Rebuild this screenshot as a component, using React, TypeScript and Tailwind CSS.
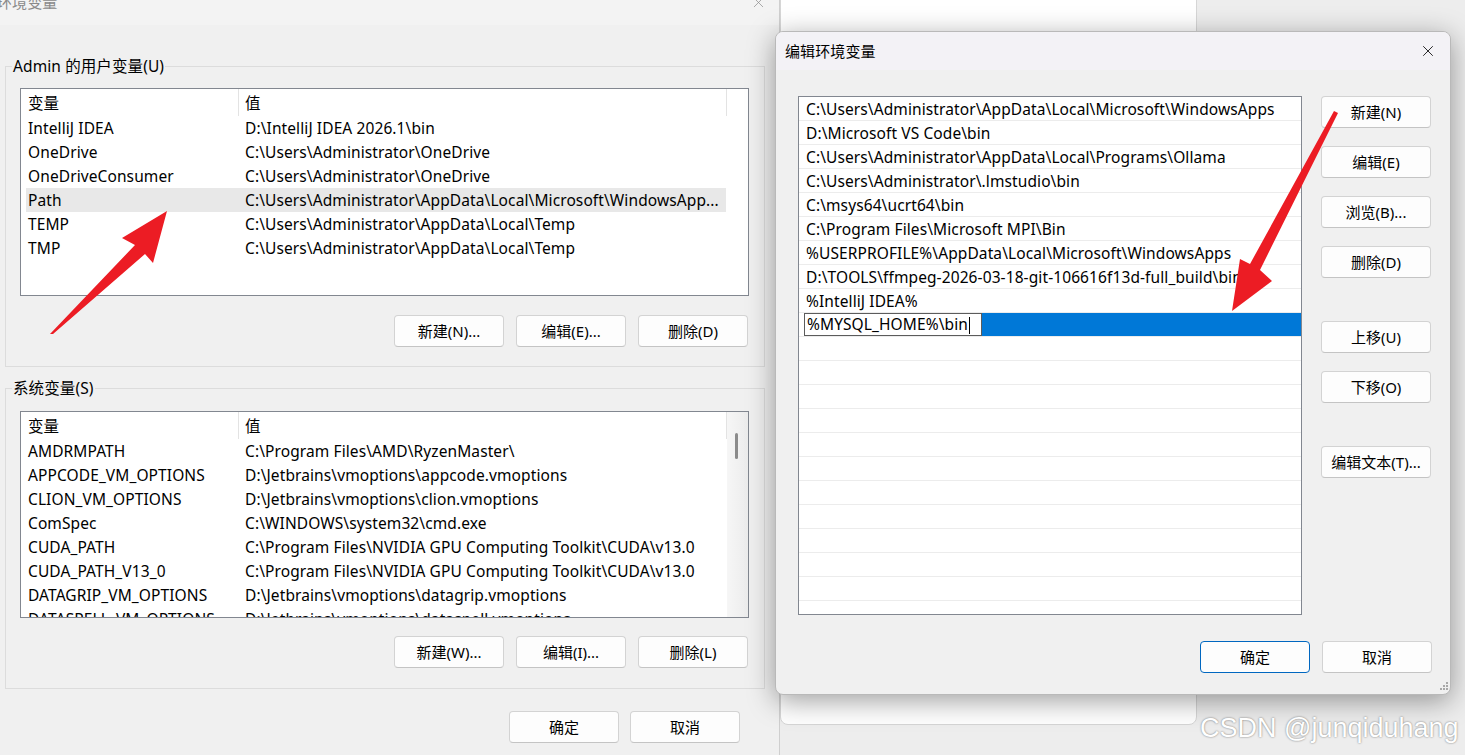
import { X } from "lucide-react"
import clsx from "clsx"

const userVars = [
  ["IntelliJ IDEA", "D:\\IntelliJ IDEA 2026.1\\bin"],
  ["OneDrive", "C:\\Users\\Administrator\\OneDrive"],
  ["OneDriveConsumer", "C:\\Users\\Administrator\\OneDrive"],
  ["Path", "C:\\Users\\Administrator\\AppData\\Local\\Microsoft\\WindowsApp..."],
  ["TEMP", "C:\\Users\\Administrator\\AppData\\Local\\Temp"],
  ["TMP", "C:\\Users\\Administrator\\AppData\\Local\\Temp"],
]

const sysVars = [
  ["AMDRMPATH", "C:\\Program Files\\AMD\\RyzenMaster\\"],
  ["APPCODE_VM_OPTIONS", "D:\\Jetbrains\\vmoptions\\appcode.vmoptions"],
  ["CLION_VM_OPTIONS", "D:\\Jetbrains\\vmoptions\\clion.vmoptions"],
  ["ComSpec", "C:\\WINDOWS\\system32\\cmd.exe"],
  ["CUDA_PATH", "C:\\Program Files\\NVIDIA GPU Computing Toolkit\\CUDA\\v13.0"],
  ["CUDA_PATH_V13_0", "C:\\Program Files\\NVIDIA GPU Computing Toolkit\\CUDA\\v13.0"],
  ["DATAGRIP_VM_OPTIONS", "D:\\Jetbrains\\vmoptions\\datagrip.vmoptions"],
  ["DATASPELL_VM_OPTIONS", "D:\\Jetbrains\\vmoptions\\dataspell.vmoptions"],
]

const pathEntries = [
  "C:\\Users\\Administrator\\AppData\\Local\\Microsoft\\WindowsApps",
  "D:\\Microsoft VS Code\\bin",
  "C:\\Users\\Administrator\\AppData\\Local\\Programs\\Ollama",
  "C:\\Users\\Administrator\\.lmstudio\\bin",
  "C:\\msys64\\ucrt64\\bin",
  "C:\\Program Files\\Microsoft MPI\\Bin",
  "%USERPROFILE%\\AppData\\Local\\Microsoft\\WindowsApps",
  "D:\\TOOLS\\ffmpeg-2026-03-18-git-106616f13d-full_build\\bin",
  "%IntelliJ IDEA%",
]

function Btn({ label, primary }: { label: string; primary?: boolean }) {
  return (
    <button
      className={clsx(
        "flex h-[32px] w-[110px] shrink-0 items-center justify-center rounded-[4px] border bg-[#fdfdfd] text-[15px] tracking-normal text-black",
        primary ? "border-[#0067c0]" : "border-[#d3d3d3] border-b-[#c4c4c4]"
      )}
    >
      {label}
    </button>
  )
}

function VarList({
  rows,
  selected,
  scroll,
  height,
}: {
  rows: string[][]
  selected?: number
  scroll?: boolean
  height: string
}) {
  return (
    <div className={clsx("flex w-[729px] overflow-hidden border border-[#828790] bg-white", height)}>
      <div className="flex w-[706px] flex-col">
        <div className="flex h-[27px] shrink-0">
          <div className="flex w-[218px] items-center border-r border-[#e3e3e3] pl-[7px] pt-[2px]">变量</div>
          <div className="flex flex-1 items-center border-r border-[#e3e3e3] pl-[6px] pt-[2px]">值</div>
        </div>
        {rows.map(([name, value], i) => (
          <div
            key={name}
            className={clsx(
              "ml-[5px] flex h-[24px] w-[700px] shrink-0 items-center whitespace-nowrap pt-[2px]",
              i === selected && "bg-[#e8e8e8]"
            )}
          >
            <div className="w-[212px] pl-[2px]">{name}</div>
            <div className="pl-[7px]">{value}</div>
          </div>
        ))}
      </div>
      {scroll ? (
        <div className="relative flex-1 bg-gradient-to-r from-[#f6f6f6] to-[#ececec]">
          <div className="absolute left-[8px] top-[21px] h-[26px] w-[3px] rounded-full bg-[#8b8b8b]" />
        </div>
      ) : (
        <div className="flex-1" />
      )}
    </div>
  )
}

function EnvDialog() {
  return (
    <div className="absolute left-[-12px] top-[-20px] flex h-[795px] w-[792px] flex-col border-r border-[#cfcfcf] bg-[#f0f0f0]">
      <div className="flex h-[45px] shrink-0 items-center justify-between bg-[#f3f3f3] pl-[9px] pr-[12px]">
        <span className="text-[15px] text-[#8a8a8a]">环境变量</span>
        <X size={17} strokeWidth={1} className="text-[#8a8a8a]" />
      </div>
      <div className="flex flex-col pl-[17px] pt-[31px]">
        <fieldset className="w-[760px] border border-[#dcdcdc] p-0">
          <legend className="ml-[6px] px-[1px] leading-[20px]">Admin 的用户变量(U)</legend>
          <div className="flex flex-col pb-[19px] pl-[14px] pt-[12px]">
            <VarList rows={userVars} selected={3} height="h-[208px]" />
            <div className="mt-[19px] flex w-[728px] justify-end gap-[12px]">
              <Btn label="新建(N)..." />
              <Btn label="编辑(E)..." />
              <Btn label="删除(D)" />
            </div>
          </div>
        </fieldset>
        <fieldset className="mt-[11px] w-[760px] border border-[#dcdcdc] p-0">
          <legend className="ml-[6px] px-[1px] leading-[20px]">系统变量(S)</legend>
          <div className="flex flex-col pb-[20px] pl-[14px] pt-[13px]">
            <VarList rows={sysVars} scroll height="h-[207px]" />
            <div className="mt-[18px] flex w-[728px] justify-end gap-[12px]">
              <Btn label="新建(W)..." />
              <Btn label="编辑(I)..." />
              <Btn label="删除(L)" />
            </div>
          </div>
        </fieldset>
        <div className="mt-[22px] flex w-[735px] justify-end gap-[11px]">
          <Btn label="确定" />
          <Btn label="取消" />
        </div>
      </div>
    </div>
  )
}

function EditDialog() {
  return (
    <div className="absolute left-[775px] top-[31px] flex h-[664px] w-[676px] flex-col overflow-hidden rounded-[8px] border border-[#b9b9b9] bg-[#f0f0f0] shadow-[0_6px_28px_rgba(0,0,0,0.38)]">
      <div className="flex h-[38px] shrink-0 items-center justify-between bg-[#f3f2f6] pl-[9px] pr-[13px]">
        <span className="text-[15px]">编辑环境变量</span>
        <X size={18} strokeWidth={1.1} className="text-black" />
      </div>
      <div className="flex flex-col pl-[22px] pr-[18px] pt-[26px]">
        <div className="flex gap-[19px]">
          <div className="flex h-[519px] w-[504px] flex-col overflow-hidden border border-[#828790] bg-white">
            {pathEntries.map((p) => (
              <div
                key={p}
                className="flex h-[24px] shrink-0 items-center whitespace-nowrap border-b border-[#ececec] pl-[7px] pt-[2px]"
              >
                {p}
              </div>
            ))}
            <div className="flex h-[24px] shrink-0 border-b border-[#ececec]">
              <div className="ml-[5px] flex w-[178px] items-center border border-[#5c5c5c] bg-white pl-[2px] pt-[1px]">
                %MYSQL_HOME%\bin
                <span className="ml-[1px] h-[17px] w-px bg-black" />
              </div>
              <div className="flex-1 bg-[#0078d7]" />
            </div>
            {Array.from({ length: 12 }, (_, i) => (
              <div key={i} className="h-[24px] shrink-0 border-b border-[#ececec]" />
            ))}
          </div>
          <div className="flex flex-col">
            <div className="flex flex-col gap-[18px]">
              <Btn label="新建(N)" />
              <Btn label="编辑(E)" />
              <Btn label="浏览(B)..." />
              <Btn label="删除(D)" />
            </div>
            <div className="mt-[43px] flex flex-col gap-[18px]">
              <Btn label="上移(U)" />
              <Btn label="下移(O)" />
            </div>
            <div className="mt-[43px]">
              <Btn label="编辑文本(T)..." />
            </div>
          </div>
        </div>
        <div className="mt-[26px] flex justify-end gap-[12px]">
          <Btn label="确定" primary />
          <Btn label="取消" />
        </div>
      </div>
      <svg className="absolute bottom-[2px] right-[2px]" width="11" height="11" viewBox="0 0 11 11">
        {[
          [9, 1],
          [6, 4],
          [9, 4],
          [3, 7],
          [6, 7],
          [9, 7],
        ].map(([x, y]) => (
          <rect key={`${x}-${y}`} x={x} y={y} width="2" height="2" fill="#a8a8a8" />
        ))}
      </svg>
    </div>
  )
}

function Arrows() {
  return (
    <svg className="pointer-events-none absolute inset-0" width="1465" height="755">
      <polygon points="50,334 53,334 145,254 153,263 167,211 122,238 135,245" fill="#ec1c24" />
      <polygon points="1334,111 1338,113 1260,270 1272,281 1232,311 1240,259 1250,264" fill="#ec1c24" />
    </svg>
  )
}

export default function App() {
  return (
    <div className="relative h-[755px] w-[1465px] overflow-hidden bg-[#ededed] font-['Noto_Sans','Noto_Sans_CJK_SC',sans-serif] text-[15.5px] tracking-[0.1px] text-black">
      <div className="absolute left-[780px] top-[-10px] h-[735px] w-[417px] rounded-b-[8px] border border-[#d6d6d6] bg-white" />
      <EnvDialog />
      <EditDialog />
      <Arrows />
      <div className="absolute left-[1200px] top-[715px] whitespace-nowrap font-['Liberation_Sans',sans-serif] text-[27px] leading-[27px] tracking-normal text-white [text-shadow:0_0_2px_rgba(0,0,0,0.55)]">
        CSDN @junqiduhang
      </div>
    </div>
  )
}
